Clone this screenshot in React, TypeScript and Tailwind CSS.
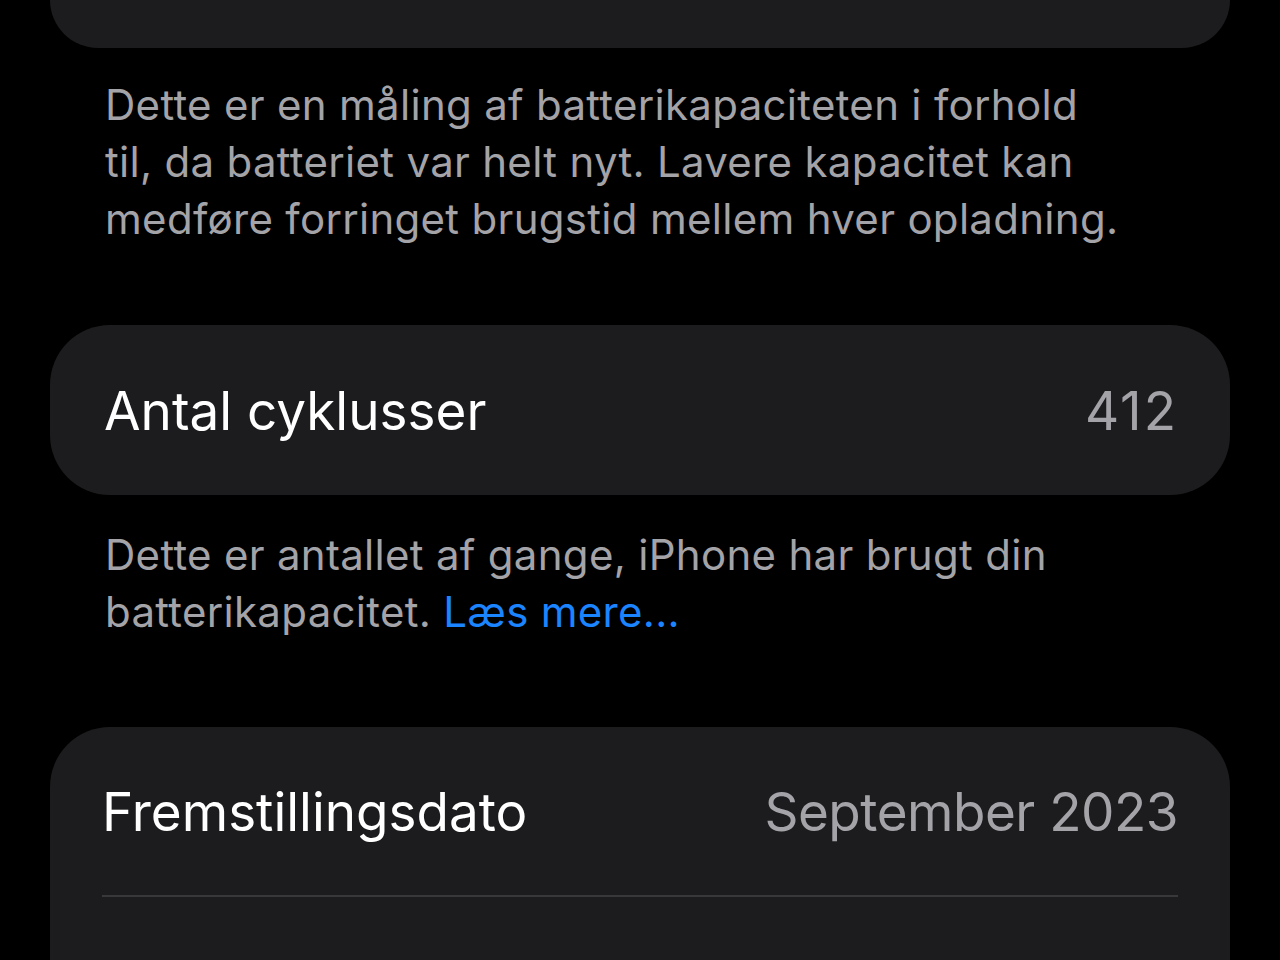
export default function App() {
  return (
    <div
      className="min-h-screen w-full overflow-hidden bg-black px-[50px]"
      style={{ fontFamily: "Inter, 'Noto Sans', sans-serif" }}
    >
      {/* Previous card, cut off by the top edge */}
      <div className="h-[48px] rounded-b-[60px] bg-[#1c1c1e]" />

      <p className="pt-[28px] pb-[78px] pl-[55px] text-[42px] leading-[57px] tracking-[0.3px] text-[#a3a3a8]">
        Dette er en måling af batterikapaciteten i forhold
        <br />
        til, da batteriet var helt nyt. Lavere kapacitet kan
        <br />
        medføre forringet brugstid mellem hver opladning.
      </p>

      {/* Cycle count */}
      <div className="flex h-[170px] items-center justify-between rounded-[60px] bg-[#1c1c1e] pl-[54px] pr-[52px]">
        <span className="mt-[4px] text-[53px] text-white">Antal cyklusser</span>
        <span className="mt-[4px] text-[53px] tracking-[2px] text-[#a3a3a8]">412</span>
      </div>

      <p className="pt-[31px] pb-[87px] pl-[55px] text-[42px] leading-[57px] tracking-[0.3px] text-[#a3a3a8]">
        Dette er antallet af gange, iPhone har brugt din
        <br />
        batterikapacitet. <span className="text-[#1b84ff]">Læs mere...</span>
      </p>

      {/* Manufacture info */}
      <div className="rounded-t-[60px] bg-[#1c1c1e] pl-[52px] pr-[52px]">
        <div className="flex h-[170px] items-center justify-between border-b-2 border-[#38383a]">
          <span className="mt-[4px] text-[53px] text-white">Fremstillingsdato</span>
          <span className="mt-[4px] text-[53px] tracking-[-0.5px] text-[#a3a3a8]">September 2023</span>
        </div>
        <div className="flex justify-between pt-[58px] pb-[60px] text-[53px] leading-none">
          <span className="text-white">Første brug</span>
          <span className="text-[#a3a3a8]">Oktober 2023</span>
        </div>
      </div>
    </div>
  );
}
